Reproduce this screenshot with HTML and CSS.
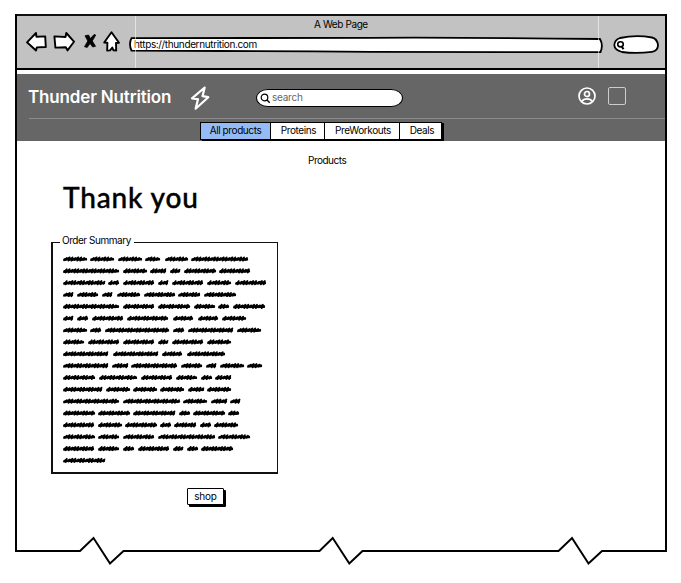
FILE: index.html
```html
<!DOCTYPE html>
<html lang="en">
<head>
<meta charset="utf-8">
<title>A Web Page</title>
<link rel="stylesheet" href="styles.css">
</head>
<body>
<div class="window">
  <header class="chrome">
    <div class="chrome-title"><span>A Web Page</span></div>
    <div class="toolbar">
      <svg class="nav-icons" width="98" height="24" viewBox="24 30 98 24">
        <g fill="#fff" stroke="#000" stroke-width="1.9" stroke-linejoin="round">
          <path d="M27 42.3L36 33L36.5 36.8L45.2 36.4L45.8 47L36.8 47.4L36 50.5Z"/>
          <path d="M54.4 36.4L65.5 37L66.3 33L74 41.7L67.5 50.4L65.8 47.2L55.4 47.6Z"/>
          <path d="M111.5 32.3L119 42.7L116 43L116.2 50.6L113.5 50.3L112.3 47.6L110 50.4L107.2 50.6L107.4 42.7L104.2 42.5Z"/>
        </g>
        <path stroke="#000" stroke-width=".8" d="M85 35.8L88.5 35L90.5 38.6L94 34.6L95.7 35L92.3 41L95.5 46.3L92.7 47L90 43.5L87.2 47.4L84.5 46.7L87.8 41Z"/>
      </svg>
      <div class="address">
        <svg class="shape" width="476" height="18" viewBox="128 36 476 18"><path d="M131.5 38.2Q240 37.6 370 37.8Q480 37.4 600 39Q603.5 45 600.5 52.2L370 51.8Q300 51 220 51L131.5 50.6Q128.5 44 131.5 38.2Z" fill="#fff" stroke="#000" stroke-width="1.8"/></svg>
        <span>https://thundernutrition.com</span>
      </div>
      <svg class="find" width="48" height="22" viewBox="612 34 48 22"><path d="M620 38Q636 34.5 652 37.5Q657 38.5 658 45Q658 51 652 51.8Q636 54 622 52Q614.5 50 614.3 45Q614.5 40 620 38Z" fill="#fff" stroke="#000" stroke-width="1.8"/><ellipse cx="620.5" cy="44.3" rx="2.8" ry="2.6" fill="none" stroke="#000" stroke-width="1.6"/><path d="M621.5 46L623.5 49.3" stroke="#000" stroke-width="2"/></svg>
    </div>
    <i class="seam seam-left"></i><i class="seam seam-right"></i>
  </header>

  <section class="masthead">
    <div class="brand-row">
      <span class="brand">Thunder Nutrition</span>
      <svg class="bolt" width="20" height="26" viewBox="190 85 20 26"><path d="M204.7 87.5L192 98.3L198 99.2L195.6 108.7L208.3 97.2L202.5 96.2Z" fill="none" stroke="#fff" stroke-width="2.2" stroke-linejoin="round"/></svg>
      <div class="search">
        <svg width="11" height="11" viewBox="0 0 11 11"><circle cx="4.5" cy="4.5" r="3.3" fill="none" stroke="#000" stroke-width="1.2"/><path d="M7 7L9.7 9.7" stroke="#000" stroke-width="1.4"/></svg>
        <span class="hint">search</span>
      </div>
      <svg class="user" width="18" height="18" viewBox="0 0 18 18" fill="none" stroke="#fff" stroke-width="1.7"><circle cx="9" cy="9" r="8"/><circle cx="9" cy="7" r="2.5"/><path d="M3.6 14.6Q5.5 11.8 9 11.8T14.4 14.6"/></svg>
      <span class="square"></span>
    </div>
    <div class="rule"></div>
    <nav class="tabs">
      <a class="tab active"><span>All products</span></a>
      <a class="tab proteins"><span>Proteins</span></a>
      <a class="tab workouts"><span>PreWorkouts</span></a>
      <a class="tab deals"><span>Deals</span></a>
    </nav>
  </section>

  <main>
    <div class="crumb"><span>Products</span></div>
    <h1>Thank you</h1>
    <section class="summary">
      <h2><span>Order Summary</span></h2>
      <svg id="scribble" width="212" height="212" viewBox="60 254 212 212"></svg>
    </section>
    <button class="shop">shop</button>
  </main>
</div>
<svg class="torn" width="654" height="32" viewBox="14 535 654 32"><path d="M15 551H80L93.5 538L110 563.5L123.5 551H319.5L332.7 538L349.3 563.5L362.5 551H558.5L572 538L588.5 563.5L602 551H667" fill="none" stroke="#000" stroke-width="2"/></svg>
<script src="script.js"></script>
</body>
</html>
```
FILE: styles.css
```css
* { box-sizing: border-box; }
body {
  margin: 0;
  padding: 14px 14px 0 15px;
  height: 583px;
  overflow: hidden;
  background: #fff;
  color: #000;
  font: 10px/12px Inter, "Liberation Sans", sans-serif;
  letter-spacing: -.4px;
}
svg { display: block; flex: none; }
span { white-space: nowrap; }
.window { height: 536px; border-left: 2px solid #000; border-right: 2px solid #000; }
.chrome {
  position: relative;
  height: 56px;
  background: #c2c2c2;
  border-top: 2px solid #111;
  border-bottom: 2px solid #000;
}
.chrome-title { height: 14px; padding: 2px 0 0 297px; }
.toolbar { display: flex; padding-left: 7px; }
.nav-icons { margin-right: 6px; }
.address { position: relative; width: 476px; height: 18px; margin-top: 6px; padding: 2px 0 0 6px; letter-spacing: -.36px; }
.address span { position: relative; }
.shape { position: absolute; left: 0; top: 0; }
.find { margin: 4px 0 0 8px; }
.seam { position: absolute; top: 0; width: 1px; height: 52px; background: rgba(255,255,255,.55); }
.seam-left { left: 118px; }
.seam-right { left: 581px; }
.masthead { height: 67px; margin-top: 4px; background: #666; overflow: hidden; }
.brand-row { display: flex; height: 44px; align-items: flex-start; padding-left: 11px; }
.brand { width: 162px; padding-top: 12px; color: #fff; font: 600 17px/22px Inter, sans-serif; letter-spacing: -.16px; }
.bolt { margin-top: 11px; }
.search {
  display: flex;
  width: 147px;
  height: 18px;
  margin: 15px 0 0 46px;
  padding: 3px 0 0 3px;
  border: 1.5px solid #000;
  border-radius: 12px / 9px;
  background: #fff;
  color: #666;
}
.hint { margin: -2px 0 0 1px; letter-spacing: -.25px; }
.user { margin: 13px 0 0 175px; }
.square { width: 18px; height: 18px; margin: 13px 0 0 12px; border: 1px solid #ccc; border-radius: 2px; }
.rule { height: 1px; margin: 0 0 3px 12px; background: #8b8b8b; }
.tabs {
  display: flex;
  width: 242px;
  height: 18px;
  margin-left: 183px;
  border: 1.5px solid #000;
  background: #fff;
  box-shadow: 2px 1px #000;
}
.tab { height: 16px; padding-top: 1px; text-align: center; border-right: 1.5px solid #000; }
.active { width: 70px; background: #94bbf3; }
.proteins { width: 54px; padding-left: 2px; }
.workouts { width: 75px; padding-left: 2px; }
.deals { flex: 1; border: 0; padding-left: 3px; }
.crumb { height: 12px; margin: 13px 0 0 291px; letter-spacing: -.5px; }
h1 {
  height: 36px;
  margin: 13px 0 0 46px;
  font: 500 28px/36px Lato, sans-serif;
  letter-spacing: .85px;
  -webkit-text-stroke: .4px #000;
}
.summary { width: 227px; height: 232px; margin: 27px 0 0 34px; border: 1.5px solid #111; border-left-width: 2px; border-bottom-width: 2px; }
h2 { display: table; height: 12px; margin: -9px 0 0 7px; padding: 0 3px 0 2px; background: #fff; font: inherit; letter-spacing: -.46px; }
.summary svg { margin: 8px 0 0 7px; }
.shop {
  display: block;
  width: 37px;
  height: 17px;
  margin: 14px 0 0 170px;
  padding: 0 0 2px;
  border: 1.5px solid #000;
  border-radius: 1px;
  background: #fff;
  box-shadow: 2px 2px #000;
  color: #000;
  font: inherit;
  letter-spacing: -.2px;
}
.torn { margin: -15px 0 0 -1px; }
```
FILE: script.js
```js
// Start and end of each scribbled word, one row per line.
const rows = `63-87 90-114 118-142 145-160 165-188 191-248
63-119 123-147 150-166 170-180 184-216 219-250
63-105 108-119 123-154 158-168 172-203 207-231 235-266
63-73 77-98 102-112 117-140 144-175 178-200 204-236
63-119 123-154 158-190 194-215 218-229 233-265
63-73 77-88 92-123 127-168 173-193 198-218 222-246
63-87 90-101 105-169 173-184 188-233 237-261
63-84 88-119 123-154 158-168 172-203 207-231
63-108 113-158 162-182 187-225
63-108 112-128 131-177 181-202 206-216 220-244 247-262
63-95 99-137 141-172 176-197 201-212 215-231
63-102 106-130 133-157 160-184 188-204 207-231
63-119 123-180 183-207 211-227 230-240
63-95 98-130 133-175 179-190 193-225 228-239
63-94 98-122 125-157 160-171 174-196 200-211 214-238
63-95 98-119 123-154 158-215 218-250
63-94 98-119 123-134 138-169 173-183 187-198 201-233
63-105`.split("\n");
let d = "", bars = "";
rows.forEach((row, r) => {
  const y = 259 + r * 11.85;
  row.split(" ").forEach(word => {
    const [a, b] = word.split("-").map(Number);
    d += `M${a + 1} ${y + 1.3}`;
    let i = 0;
    for (let x = a + 3; x < b - 1; x += 2.9) {
      const h = (i++ + r) % 3 ? 1.7 : 1.1;
      d += `L${x + .8} ${y - h}L${x - .4} ${y + h}`;
    }
    d += `L${b - 1} ${y - .4}`;
    bars += `M${a + 1.5} ${y + .4}H${b - 1}`;
  });
});
document.getElementById("scribble").innerHTML =
  `<g fill="none" stroke="#000" stroke-linecap="round" stroke-linejoin="round"><path stroke-width="1.7" d="${d}"/><path stroke-width="2.4" d="${bars}"/></g>`;
```
